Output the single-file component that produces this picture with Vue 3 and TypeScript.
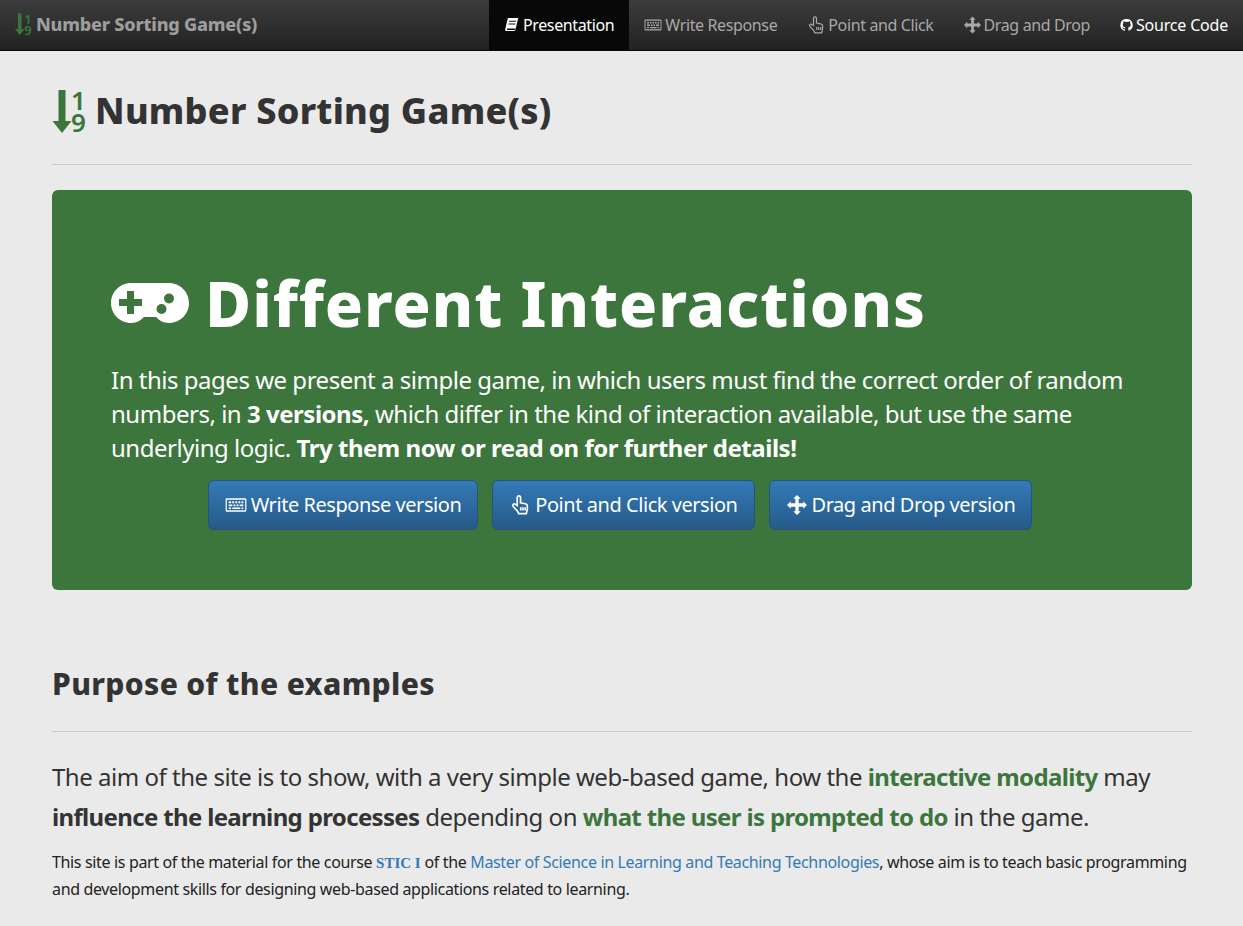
<template>
  <nav class="navbar">
    <a class="brand">
      <svg class="sort-icon small" viewBox="0 0 34 44"><path d="M6 1h7v31h6L9.500 44 0 32h6z" /><text x="26" y="21" text-anchor="middle">1</text><text x="26" y="43" text-anchor="middle">9</text></svg>
      Number Sorting Game(s)
    </a>
    <ul class="nav-links">
      <li class="active"><svg class="icon book" viewBox="0 0 16 16"><path d="M4.500 1H15l-.6 1.200-2.600 10.800c-.3 1.300-1.200 2-2.500 2H2.300C1 15 .4 14 .9 12.500L3.300 2C3.500 1.400 4 1 4.500 1zm.6 3-.2 1h7.300l.2-1zm-.7 3-.2 1h7.300l.2-1zM2.700 12.200c-.3 1 0 1.600.8 1.600h6.700c.7 0 1.100-.4 1.300-1.100l.1-.5z" fill-rule="evenodd" /></svg> Presentation</li>
      <li><svg class="icon" viewBox="0 0 18 16"><path d="M1.500 2.500h15a1 1 0 0 1 1 1v9a1 1 0 0 1-1 1h-15a1 1 0 0 1-1-1v-9a1 1 0 0 1 1-1zm0 1.200v8.600h15V3.700zM3 5h2v1.500H3zm3 0h1.500v1.500H6zm2.500 0H10v1.500H8.500zM11 5h1.500v1.500H11zm2.500 0H15v1.500h-1.500zM3 7.500h3V9H3zm4 0h1.500V9H7zm2.500 0H11V9H9.500zm2.500 0h3V9h-3zM3 10h2v1.300H3zm3 0h6.500v1.300H6zm7.500 0H15v1.300h-1.500z" fill-rule="evenodd" /></svg> Write Response</li>
      <li><svg class="icon tall" viewBox="0 0 16 18"><path class="hand" d="M5.500 9.500V2.300a1.500 1.500 0 0 1 3 0V7l4.200.9c1 .2 1.900 1 1.900 2.100v2.500c0 .6-.1 1-.3 1.500l-.6 2.800H6.800l-1-2.200-3.900-4.200c-1.100-1.500.6-3.100 2-1.900z" /><path class="hand" d="M8.700 11v3M10.700 11v3M12.700 11v3" /></svg> Point and Click</li>
      <li><svg class="icon tall move" viewBox="0 0 18 18"><path d="M9 0l3.400 3.400h-1.900v4.100h4.100V5.600L18 9l-3.400 3.400v-1.900h-4.100v4.100h1.900L9 18l-3.400-3.400h1.900v-4.100H3.400v1.900L0 9l3.400-3.400v1.900h4.100V3.400H5.600z" /></svg> Drag and Drop</li>
      <li class="source"><svg class="icon gh" viewBox="0 0 16 16"><path d="M8 .5a7.500 7.500 0 0 0-2.400 14.600c.4.100.5-.2.500-.4v-1.500c-2.100.5-2.500-.9-2.500-.9-.4-.9-.9-1.100-.9-1.100-.7-.5.100-.5.100-.5.800.1 1.200.8 1.200.8.700 1.200 1.800.8 2.300.6.100-.5.300-.8.500-1-1.700-.2-3.400-.8-3.400-3.700 0-.8.300-1.500.8-2-.1-.2-.3-1 .1-2 0 0 .6-.2 2.100.8a7 7 0 0 1 3.800 0c1.500-1 2.100-.8 2.100-.8.400 1 .2 1.800.1 2 .5.500.8 1.200.8 2 0 2.900-1.800 3.500-3.400 3.700.3.200.5.700.5 1.400v2.100c0 .2.100.5.500.4A7.500 7.500 0 0 0 8 .5z" /></svg> Source Code</li>
    </ul>
  </nav>

  <main class="container">
    <header class="page-header">
      <h1>
        <svg class="sort-icon" viewBox="0 0 34 44"><path d="M6 1h7v31h6L9.500 44 0 32h6z" /><text x="26" y="21" text-anchor="middle">1</text><text x="26" y="43" text-anchor="middle">9</text></svg>
        Number Sorting Game(s)
      </h1>
    </header>

    <section class="jumbotron">
      <h2>
        <svg class="gamepad" viewBox="0 0 78 40"><path fill-rule="evenodd" d="M20 0h38c11 0 20 9 20 20s-9 20-20 20c-6 0-10-3-13-6H33c-3 3-7 6-13 6C9 40 0 31 0 20S9 0 20 0zM16 8v8H8v7h8v8h7v-8h8v-7h-8V8zM58 10.500a5 5 0 1 0 0 10 5 5 0 0 0 0-10zM50.500 21a5 5 0 1 0 0 10 5 5 0 0 0 0-10z" /></svg>
        Different Interactions
      </h2>
      <p>In this pages we present a simple game, in which users must find the correct order of random numbers, in <b>3 versions,</b> which differ in the kind of interaction available, but use the same underlying logic. <b>Try them now or read on for further details!</b></p>
      <div class="actions">
        <button v-for="b in buttons" :key="b.label">
          <svg class="icon" :viewBox="b.box" v-html="b.icon"></svg>
          {{ b.label }}
        </button>
      </div>
    </section>

    <h2 class="section-title">Purpose of the examples</h2>
    <hr />
    <p class="lead">The aim of the site is to show, with a very simple web-based game, how the <b class="green">interactive modality</b> may <b>influence the learning processes</b> depending on <b class="green">what the user is prompted to do</b> in the game.</p>
    <p class="body-text">This site is part of the material for the course <a class="stic">STIC I</a> of the <a>Master of Science in Learning and Teaching Technologies</a>, whose aim is to teach basic programming and development skills for designing web-based applications related to learning.</p>
  </main>
</template>

<script setup lang="ts">
interface ActionButton {
  label: string
  box: string
  icon: string
}

const buttons: ActionButton[] = [
  {
    label: 'Write Response version',
    box: '0 0 18 16',
    icon: '<path fill="#fff" fill-rule="evenodd" d="M1.500 2.500h15a1 1 0 0 1 1 1v9a1 1 0 0 1-1 1h-15a1 1 0 0 1-1-1v-9a1 1 0 0 1 1-1zm0 1.200v8.600h15V3.700zM3 5h2v1.500H3zm3 0h1.500v1.500H6zm2.500 0H10v1.500H8.500zM11 5h1.500v1.500H11zm2.500 0H15v1.500h-1.500zM3 7.500h3V9H3zm4 0h1.500V9H7zm2.500 0H11V9H9.500zm2.500 0h3V9h-3zM3 10h2v1.300H3zm3 0h6.500v1.300H6zm7.500 0H15v1.300h-1.500z"/>',
  },
  {
    label: 'Point and Click version',
    box: '0 0 16 18',
    icon: '<path fill="none" stroke="#fff" stroke-width="1.500" d="M5.500 9.500V2.300a1.500 1.500 0 0 1 3 0V7l4.200.9c1 .2 1.900 1 1.900 2.100v2.500c0 .6-.1 1-.3 1.500l-.6 2.800H6.800l-1-2.200-3.900-4.200c-1.100-1.500.6-3.100 2-1.900zM8.700 11v3M10.700 11v3M12.700 11v3"/>',
  },
  {
    label: 'Drag and Drop version',
    box: '0 0 18 18',
    icon: '<path fill="#fff" d="M9 0l3.400 3.400h-1.900v4.100h4.100V5.600L18 9l-3.400 3.400v-1.900h-4.100v4.100h1.900L9 18l-3.400-3.400h1.900v-4.100H3.400v1.900L0 9l3.400-3.400v1.900h4.100V3.400H5.600z"/>',
  },
]
</script>

<style>
html,
body {
  background: #eaeaea;
}
</style>

<style scoped>
.navbar {
  height: 50px;
  border-bottom: 1px solid #080808;
  background: linear-gradient(to bottom, #3c3c3c 0%, #222 100%);
  display: flex;
  justify-content: space-between;
  font-family: "Noto Sans", "Open Sans", sans-serif;
}

.brand {
  display: flex;
  align-items: center;
  gap: 4px;
  padding: 0 0 2px 15px;
  color: #9d9d9d;
  font: 800 18px/48px "Noto Sans", sans-serif;
  letter-spacing: -0.2px;
}

.nav-links {
  display: flex;
  list-style: none;
  margin: 0;
  padding: 0;
  font-size: 16px;
  letter-spacing: -0.370px;
  line-height: 48px;
  color: #a8a8a8;
}

.nav-links li {
  display: flex;
  align-items: center;
  gap: 3px;
  padding: 0 15px 1px;
  white-space: nowrap;
}

.nav-links li.active {
  background: #080808;
  color: #fff;
}

.nav-links li.source {
  color: #fff;
  letter-spacing: -0.200px;
}

.icon {
  width: 18px;
  height: 16px;
  fill: currentColor;
  flex: none;
}

.icon.book {
  width: 16px;
  height: 15px;
}

.icon.tall {
  height: 18px;
}

.icon.move {
  width: 17px;
}

.icon.gh {
  width: 13px;
  height: 14px;
}

.hand {
  fill: none;
  stroke: currentColor;
  stroke-width: 1.200;
}

.sort-icon {
  width: 35px;
  height: 44px;
  fill: #3c763d;
  flex: none;
  overflow: visible;
}

.sort-icon text {
  font: 600 26px "Noto Sans", sans-serif;
}

.sort-icon.small {
  width: 17px;
  height: 22px;
}

.container {
  padding: 0 51px 0 52px;
  color: #333;
  font-family: "Noto Sans", "Open Sans", sans-serif;
}

.page-header {
  margin-top: 38px;
  height: 75px;
  border-bottom: 1px solid #ccc;
}

h1 {
  margin: 0;
  display: flex;
  align-items: center;
  gap: 8px;
  font: 800 36px/44px "Noto Sans", sans-serif;
  letter-spacing: 0.250px;
}

.jumbotron {
  box-sizing: border-box;
  margin-top: 25px;
  height: 400px;
  padding: 73px 60px 0 59px;
  border-radius: 6px;
  background: #3c763d;
  color: #fff;
}

.jumbotron h2 {
  margin: 0;
  display: flex;
  align-items: center;
  gap: 16px;
  font: 800 63px/80px "Noto Sans", sans-serif;
  letter-spacing: 0.950px;
}

.gamepad {
  width: 78px;
  height: 40px;
  fill: #fff;
  flex: none;
}

.jumbotron p {
  margin: 20px 0 15px;
  font-size: 24px;
  letter-spacing: -0.480px;
  line-height: 34px;
}

.actions {
  display: flex;
  justify-content: center;
  gap: 14px;
  padding-right: 3px;
}

.actions button {
  display: flex;
  align-items: center;
  gap: 4px;
  height: 50px;
  padding: 0 16px 1px;
  border: 1px solid #245580;
  border-radius: 6px;
  background: linear-gradient(to bottom, #337ab7 0%, #265a88 100%);
  color: #fff;
  font: 20px "Noto Sans", "Open Sans", sans-serif;
  letter-spacing: -0.450px;
}

.actions .icon {
  width: 22px;
  height: 20px;
}

.section-title {
  margin: 74px 0 0;
  font: 800 30px/40px "Noto Sans", sans-serif;
  letter-spacing: 0.350px;
}

hr {
  margin: 27px 0 0;
  border: 0;
  border-top: 1px solid #ccc;
}

.lead {
  margin: 25px 0 0;
  font-size: 24px;
  letter-spacing: -0.480px;
  line-height: 40px;
}

.lead b {
  letter-spacing: -0.650px;
}

.green {
  color: #3c763d;
}

.body-text {
  margin: 12px 0 0;
  font-size: 16px;
  letter-spacing: -0.350px;
  line-height: 26px;
  color: #222;
}

.body-text a {
  color: #337ab7;
}

.stic {
  font-family: "Liberation Serif", serif;
  font-weight: 700;
  font-size: 15px;
  letter-spacing: 0;
}
</style>
